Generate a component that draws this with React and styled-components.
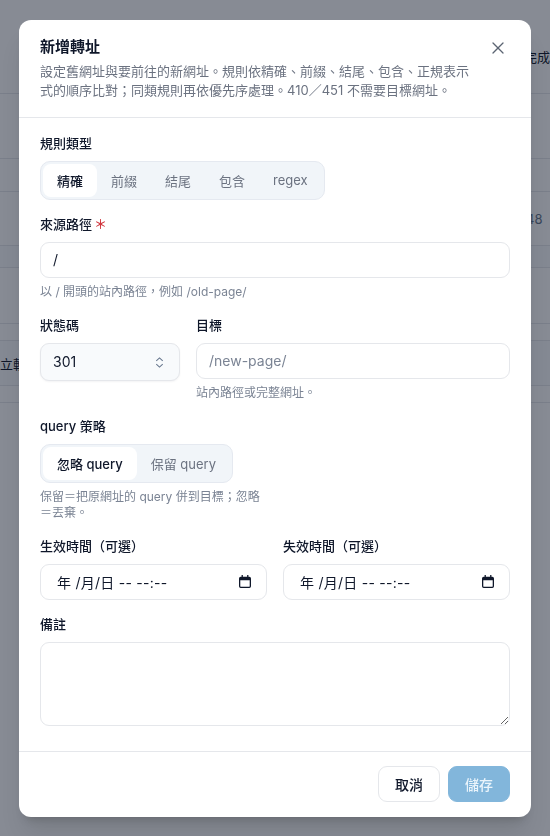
import React from "react";
import styled, { createGlobalStyle } from "styled-components";
import { X } from "lucide-react";

const FONT = `Inter, "Noto Sans CJK TC", "Noto Sans", sans-serif`;

const Global = createGlobalStyle`
  * { box-sizing: border-box; }
  html, body { margin: 0; height: 100%; background: #fff; overflow: hidden; }
  body { font-family: ${FONT}; color: #0f172a; }
`;

const BackPage = styled.div`
  height: 836px;
  overflow: hidden;
`;

const BackRow = styled.div`
  height: ${(p) => p.$h}px;
  border-bottom: 1px solid #e5e7eb;
  background: ${(p) => (p.$shade ? "#f8fafc" : "#fff")};
  display: flex;
  align-items: center;
  padding: ${(p) => p.$pad || "0"};
  font-size: 13px;
  color: ${(p) => p.$color || "#0f172a"};
  overflow: hidden;
  white-space: nowrap;
`;

const Overlay = styled.div`
  position: fixed;
  inset: 0;
  background: rgba(15, 23, 42, 0.5);
  display: flex;
  align-items: center;
  justify-content: center;
`;

const Modal = styled.div`
  width: 512px;
  height: 797px;
  background: #fff;
  border-radius: 12px;
  box-shadow: 0 20px 25px -5px rgba(0, 0, 0, 0.1), 0 8px 10px -6px rgba(0, 0, 0, 0.18);
  display: flex;
  flex-direction: column;
`;

const Header = styled.header`
  height: 98px;
  padding: 17px 21px 0;
  border-bottom: 1px solid #e5e7eb;
  display: flex;
  justify-content: space-between;
  align-items: flex-start;
`;

const Title = styled.h2`
  margin: 0;
  font-size: 15px;
  line-height: 20px;
  font-weight: 600;
  color: #0f172a;
`;

const Desc = styled.p`
  margin: 5px 0 0;
  width: 436px;
  font-size: 13px;
  line-height: 19px;
  color: #6b7280;
`;

const CloseButton = styled.button`
  border: 0;
  background: none;
  padding: 0;
  width: 20px;
  height: 20px;
  margin: 1px 2px 0 0;
  color: #5b6472;
  display: flex;
`;

const Body = styled.div`
  flex: 1;
  padding: 18px 21px 0;
  display: flex;
  flex-direction: column;
  gap: 17px;
`;

const Field = styled.div`
  display: flex;
  flex-direction: column;
  min-width: 0;
`;

const Label = styled.label`
  font-size: 13px;
  line-height: 15px;
  font-weight: 500;
  color: #0f172a;
  margin-bottom: 10px;
`;

const Required = styled.span`
  color: #d0343c;
  margin-left: 2px;
`;

const Segmented = styled.div`
  display: inline-flex;
  align-self: flex-start;
  height: 39px;
  padding: 2px;
  background: #f1f5f9;
  border: 1px solid #e5e9f0;
  border-radius: 10px;
`;

const Segment = styled.button`
  border: 0;
  padding: 0 14px;
  font: inherit;
  font-size: 13px;
  font-weight: ${(p) => (p.$active ? 500 : 400)};
  background: ${(p) => (p.$active ? "#fff" : "transparent")};
  color: ${(p) => (p.$active ? "#0f172a" : "#6b7280")};
  border-radius: 8px;
`;

const TextInput = styled.input`
  height: 36px;
  width: 100%;
  padding: 0 12px;
  font: inherit;
  font-size: 14px;
  color: #0f172a;
  background: #fff;
  border: 1px solid #e5e7eb;
  border-radius: 9px;
  outline: none;
  &::placeholder { color: #7b8494; }
`;

const Hint = styled.p`
  margin: 6px 0 0;
  font-size: 12px;
  line-height: 16px;
  color: #7b8494;
`;

const StatusRow = styled.div`
  display: grid;
  grid-template-columns: 140px 1fr;
  gap: 16px;
  margin-top: 1px;
`;

const TwoCols = styled.div`
  display: grid;
  grid-template-columns: 1fr 1fr;
  gap: 16px;
  margin-top: 1px;
`;

const SelectBox = styled.div`
  position: relative;
  height: 38px;
  color: #64748b;
`;

const Select = styled.select`
  appearance: none;
  width: 100%;
  height: 100%;
  padding: 0 12px;
  font: inherit;
  font-size: 14px;
  color: #0f172a;
  background: #f8fafc;
  border: 1px solid #e5e7eb;
  border-radius: 9px;
  box-shadow: 0 1px 2px rgba(15, 23, 42, 0.05);
`;

const SelectIcon = styled.svg`
  position: absolute;
  right: 16px;
  top: 14px;
  pointer-events: none;
`;

const DateBox = styled.div`
  height: 36px;
  padding: 0 15px 0 16px;
  display: flex;
  align-items: center;
  justify-content: space-between;
  font-size: 14px;
  color: #0f172a;
  background: #fff;
  border: 1px solid #e5e7eb;
  border-radius: 9px;
`;

const DateText = styled.span`
  white-space: pre;
  letter-spacing: 0.25px;
`;

const TextArea = styled.textarea`
  display: block;
  width: 100%;
  height: 84px;
  padding: 8px 12px;
  font: inherit;
  font-size: 14px;
  background: #fff;
  border: 1px solid #e5e7eb;
  border-radius: 9px;
  outline: none;
  resize: vertical;
`;

const Footer = styled.footer`
  height: 66px;
  padding: 14px 21px 0;
  border-top: 1px solid #e5e7eb;
  display: flex;
  justify-content: flex-end;
  gap: 8px;
`;

const Button = styled.button`
  width: 62px;
  height: 36px;
  font: inherit;
  font-size: 14px;
  font-weight: 500;
  border-radius: 9px;
  border: 1px solid ${(p) => (p.$primary ? "#82b6db" : "#e5e7eb")};
  background: ${(p) => (p.$primary ? "#82b6db" : "#fff")};
  color: ${(p) => (p.$primary ? "#eaf4fb" : "#0f172a")};
`;

function CalendarIcon() {
  return (
    <svg width="12" height="13" viewBox="0 0 14 15" fill="#0f172a">
      <path d="M3 0h1.5v2h5V0H11v2h1a2 2 0 0 1 2 2v9a2 2 0 0 1-2 2H2a2 2 0 0 1-2-2V4a2 2 0 0 1 2-2h1V0zM1.5 6v7c0 .3.2.5.5.5h10c.3 0 .5-.2.5-.5V6h-11z" />
    </svg>
  );
}

function DateField({ label }) {
  return (
    <Field>
      <Label>{label}</Label>
      <DateBox>
        <DateText>年 /月/日 -- --:--</DateText>
        <CalendarIcon />
      </DateBox>
    </Field>
  );
}

export default function App() {
  return (
    <>
      <Global />
      <BackPage>
        <BackRow $h={94} $pad="20px 0 0 524px">完成</BackRow>
        <BackRow $h={65} />
        <BackRow $h={33} />
        <BackRow $h={54} $color="#64748b" $pad="0 0 0 526px">48</BackRow>
        <BackRow $h={22} $shade />
        <BackRow $h={56} />
        <BackRow $h={17} />
        <BackRow $h={45} $shade>立軌</BackRow>
        <BackRow $h={17} />
      </BackPage>
      <Overlay>
        <Modal>
          <Header>
            <div>
              <Title>新增轉址</Title>
              <Desc>
                設定舊網址與要前往的新網址。規則依精確、前綴、結尾、包含、正規表示式的順序比對&#xFF1B;同類規則再依優先序處理。410&#xFF0F;451 不需要目標網址。
              </Desc>
            </div>
            <CloseButton aria-label="關閉">
              <X size={20} strokeWidth={1.5} />
            </CloseButton>
          </Header>
          <Body>
            <Field>
              <Label>規則類型</Label>
              <Segmented>
                <Segment $active>精確</Segment>
                <Segment>前綴</Segment>
                <Segment>結尾</Segment>
                <Segment>包含</Segment>
                <Segment>regex</Segment>
              </Segmented>
            </Field>
            <Field>
              <Label>來源路徑<Required>&#xFF0A;</Required></Label>
              <TextInput defaultValue="/" />
              <Hint>以 / 開頭的站內路徑&#xFF0C;例如 /old-page/</Hint>
            </Field>
            <StatusRow>
              <Field>
                <Label>狀態碼</Label>
                <SelectBox>
                  <Select defaultValue="301">
                    <option>301</option>
                    <option>302</option>
                    <option>410</option>
                    <option>451</option>
                  </Select>
                  <SelectIcon width="9" height="11" viewBox="0 0 9 12" fill="none" stroke="currentColor" strokeWidth="1.1">
                    <path d="M1 4.2 4.5 1 8 4.2M1 7.8 4.5 11 8 7.8" />
                  </SelectIcon>
                </SelectBox>
              </Field>
              <Field>
                <Label>目標</Label>
                <TextInput placeholder="/new-page/" />
                <Hint>站內路徑或完整網址。</Hint>
              </Field>
            </StatusRow>
            <TwoCols>
              <Field>
                <Label>query 策略</Label>
                <Segmented>
                  <Segment $active>忽略 query</Segment>
                  <Segment>保留 query</Segment>
                </Segmented>
                <Hint>保留&#xFF1D;把原網址的 query 併到目標&#xFF1B;忽略&#xFF1D;丟棄。</Hint>
              </Field>
            </TwoCols>
            <TwoCols>
              <DateField label="生效時間&#xFF08;可選&#xFF09;" />
              <DateField label="失效時間&#xFF08;可選&#xFF09;" />
            </TwoCols>
            <Field>
              <Label>備註</Label>
              <TextArea />
            </Field>
          </Body>
          <Footer>
            <Button>取消</Button>
            <Button $primary>儲存</Button>
          </Footer>
        </Modal>
      </Overlay>
    </>
  );
}
